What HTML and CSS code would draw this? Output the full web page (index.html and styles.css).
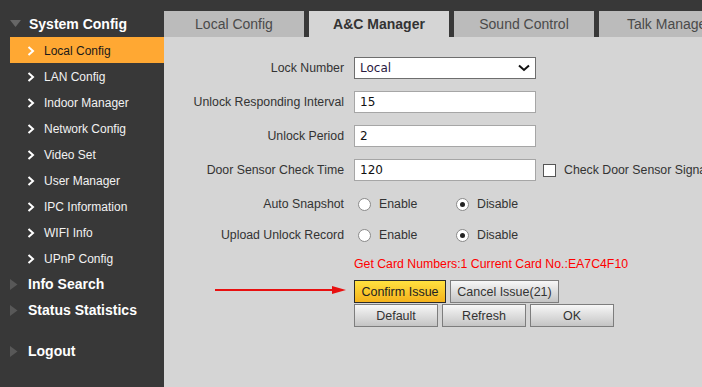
FILE: index.html
```html
<!DOCTYPE html>
<html lang="en">
<head>
    <meta charset="UTF-8">
    <meta name="viewport" content="width=device-width, initial-scale=1.0">
    <title>A&amp;C Manager</title>
    <link rel="stylesheet" href="styles.css">
</head>
<body>
    <div class="layout">

        <!-- Left menu -->
        <aside class="sidebar">
            <div class="menu-head open">
                <svg class="tri" width="11" height="8" viewBox="0 0 11 8"><polygon points="0,0 11,0 5.5,7" fill="#666"/></svg>
                System Config
            </div>
            <ul class="submenu">
                <li class="active"><svg class="chev" width="8" height="10" viewBox="0 0 8 10"><polyline points="1.5,1 6,5 1.5,9" fill="none" stroke-width="2"/></svg>Local Config</li>
                <li><svg class="chev" width="8" height="10" viewBox="0 0 8 10"><polyline points="1.5,1 6,5 1.5,9" fill="none" stroke-width="2"/></svg>LAN Config</li>
                <li><svg class="chev" width="8" height="10" viewBox="0 0 8 10"><polyline points="1.5,1 6,5 1.5,9" fill="none" stroke-width="2"/></svg>Indoor Manager</li>
                <li><svg class="chev" width="8" height="10" viewBox="0 0 8 10"><polyline points="1.5,1 6,5 1.5,9" fill="none" stroke-width="2"/></svg>Network Config</li>
                <li><svg class="chev" width="8" height="10" viewBox="0 0 8 10"><polyline points="1.5,1 6,5 1.5,9" fill="none" stroke-width="2"/></svg>Video Set</li>
                <li><svg class="chev" width="8" height="10" viewBox="0 0 8 10"><polyline points="1.5,1 6,5 1.5,9" fill="none" stroke-width="2"/></svg>User Manager</li>
                <li><svg class="chev" width="8" height="10" viewBox="0 0 8 10"><polyline points="1.5,1 6,5 1.5,9" fill="none" stroke-width="2"/></svg>IPC Information</li>
                <li><svg class="chev" width="8" height="10" viewBox="0 0 8 10"><polyline points="1.5,1 6,5 1.5,9" fill="none" stroke-width="2"/></svg>WIFI Info</li>
                <li><svg class="chev" width="8" height="10" viewBox="0 0 8 10"><polyline points="1.5,1 6,5 1.5,9" fill="none" stroke-width="2"/></svg>UPnP Config</li>
            </ul>
            <div class="menu-head">
                <svg class="tri" width="8" height="11" viewBox="0 0 8 11"><polygon points="0,0 7.5,5.5 0,11" fill="#585858"/></svg>
                Info Search
            </div>
            <div class="menu-head">
                <svg class="tri" width="8" height="11" viewBox="0 0 8 11"><polygon points="0,0 7.5,5.5 0,11" fill="#585858"/></svg>
                Status Statistics
            </div>
            <div class="menu-head logout">
                <svg class="tri" width="8" height="11" viewBox="0 0 8 11"><polygon points="0,0 7.5,5.5 0,11" fill="#585858"/></svg>
                Logout
            </div>
        </aside>

        <!-- Main area -->
        <main class="main">
            <nav class="tabs">
                <div class="tab">Local Config</div>
                <div class="tab active">A&amp;C Manager</div>
                <div class="tab">Sound Control</div>
                <div class="tab">Talk Manager</div>
            </nav>

            <section class="panel">
                <div class="row">
                    <label>Lock Number</label>
                    <div class="select-box">
                        <span>Local</span>
                        <svg width="12" height="8" viewBox="0 0 12 8"><polyline points="1,1.5 6,6 11,1.5" fill="none" stroke="#111" stroke-width="2"/></svg>
                    </div>
                </div>
                <div class="row">
                    <label>Unlock Responding Interval</label>
                    <input type="text" class="field" value="15">
                </div>
                <div class="row">
                    <label>Unlock Period</label>
                    <input type="text" class="field" value="2">
                </div>
                <div class="row">
                    <label>Door Sensor Check Time</label>
                    <div class="inline">
                        <input type="text" class="field" value="120">
                        <span class="check"></span>
                        <span class="check-text">Check Door Sensor Signal</span>
                    </div>
                </div>
                <div class="row">
                    <label>Auto Snapshot</label>
                    <div class="inline">
                        <span class="radio-opt"><span class="radio"></span>Enable</span>
                        <span class="radio-opt"><span class="radio checked"></span>Disable</span>
                    </div>
                </div>
                <div class="row short">
                    <label>Upload Unlock Record</label>
                    <div class="inline">
                        <span class="radio-opt"><span class="radio"></span>Enable</span>
                        <span class="radio-opt"><span class="radio checked"></span>Disable</span>
                    </div>
                </div>
                <div class="row message">
                    <span></span>
                    <span class="card-info">Get Card Numbers:1 Current Card No.:EA7C4F10</span>
                </div>

                <div class="buttons">
                    <div class="btn-line">
                        <button class="btn btn-confirm">Confirm Issue</button>
                        <button class="btn btn-cancel">Cancel Issue(21)</button>
                    </div>
                    <div class="btn-line">
                        <button class="btn">Default</button>
                        <button class="btn">Refresh</button>
                        <button class="btn">OK</button>
                    </div>
                </div>

                <!-- annotation arrow -->
                <svg class="arrow" width="132" height="10" viewBox="0 0 132 10">
                    <line x1="0" y1="5" x2="120" y2="5" stroke="#e81010" stroke-width="2"/>
                    <polygon points="117,1 131,5 117,9" fill="#e81010"/>
                </svg>
            </section>
        </main>
    </div>
</body>
</html>
```

FILE: styles.css
```css
/* Door station web config - A&C Manager */

body {
    margin: 0;
    padding: 0;
    background-color: #383838;
    font-family: "Liberation Sans", Arial, sans-serif;
    overflow: hidden;
}

.layout {
    display: flex;
    height: 100vh;
}

/* ---------- sidebar ---------- */

.sidebar {
    width: 164px;
    flex-shrink: 0;
    padding-top: 11px;
    background-color: #383838;
    box-sizing: border-box;
}

.menu-head {
    height: 26px;
    display: flex;
    align-items: center;
    padding-left: 10px;
    color: #ffffff;
    font-size: 14px;
    font-weight: bold;
    white-space: nowrap;
}

.menu-head .tri {
    margin-right: 10px;
}

.menu-head.open .tri {
    margin-right: 8px;
}

.menu-head.logout {
    margin-top: 15px;
}

.submenu {
    list-style: none;
    margin: 0;
    padding: 0;
}

.submenu li {
    height: 26px;
    margin-left: 10px;
    display: flex;
    align-items: center;
    padding-left: 17px;
    padding-top: 1px;
    box-sizing: border-box;
    color: #f2f2f2;
    font-size: 12px;
    white-space: nowrap;
}

.submenu .chev {
    stroke: #ffffff;
    margin-right: 9px;
}

.submenu li.active {
    background-color: #ffa833;
    color: #1a1a1a;
}

/* ---------- main ---------- */

.main {
    flex: 1;
    display: flex;
    flex-direction: column;
    padding-top: 11px;
    overflow: hidden;
    min-width: 0;
}

.tabs {
    display: flex;
    gap: 5px;
    height: 26px;
    flex-shrink: 0;
}

.tab {
    width: 140px;
    flex-shrink: 0;
    background-color: #bbbbbb;
    color: #4a4a4a;
    font-size: 14px;
    display: flex;
    align-items: center;
    justify-content: center;
    white-space: nowrap;
}

.tab.active {
    background-color: #d5d5d5;
    color: #333333;
    font-weight: bold;
}

.panel {
    flex: 1;
    position: relative;
    background-color: #d5d5d5;
    padding-top: 14px;
    font-size: 12.3px;
    color: #333333;
}

.row {
    display: grid;
    grid-template-columns: 180px 1fr;
    column-gap: 10px;
    align-items: center;
    height: 34px;
    white-space: nowrap;
}

.row label {
    text-align: right;
}

.row.short {
    height: 28px;
}

.row.message {
    height: 29px;
}

.field,
.select-box {
    width: 182px;
    height: 22px;
    box-sizing: border-box;
    border: 1px solid #a6a6a6;
    background-color: #ffffff;
    font-family: "DejaVu Sans", sans-serif;
    font-size: 12px;
    color: #111111;
    padding: 0 5px;
    margin: 0;
    outline: none;
}

.select-box {
    display: flex;
    align-items: center;
    justify-content: space-between;
    border-color: #6e6e6e;
    color: #2a1a40;
    padding-right: 5px;
}

.inline {
    display: flex;
    align-items: center;
}

.check {
    width: 13px;
    height: 13px;
    box-sizing: border-box;
    border: 1px solid #555555;
    background-color: #ffffff;
    margin-left: 7px;
}

.check-text {
    margin-left: 8px;
}

.radio-opt {
    width: 98px;
    display: flex;
    align-items: center;
    padding-left: 4px;
    box-sizing: border-box;
}

.radio {
    width: 13px;
    height: 13px;
    box-sizing: border-box;
    border: 1px solid #8a8a8a;
    border-radius: 50%;
    background-color: #ffffff;
    margin-right: 8px;
    display: flex;
    align-items: center;
    justify-content: center;
}

.radio.checked::after {
    content: "";
    width: 5px;
    height: 5px;
    border-radius: 50%;
    background-color: #222222;
}

.card-info {
    color: #ff0000;
}

.buttons {
    margin-top: 2px;
    padding-left: 190px;
}

.btn-line {
    display: flex;
    gap: 4px;
}

.btn {
    width: 84px;
    height: 23px;
    margin: 0;
    padding: 0;
    border: 1px solid #7d7d7d;
    background: linear-gradient(#f7f7f7, #c4c4c4);
    font-family: "Liberation Sans", Arial, sans-serif;
    font-size: 12.5px;
    color: #333333;
}

.btn-line + .btn-line {
    margin-top: 1px;
}

.btn-confirm {
    width: 92px;
    border-color: #2a2a2a;
    background: linear-gradient(#ffe13f, #f5b21c);
    color: #222222;
}

.btn-cancel {
    width: 109px;
}

.arrow {
    position: absolute;
    left: 51px;
    top: 248px;
}
```
